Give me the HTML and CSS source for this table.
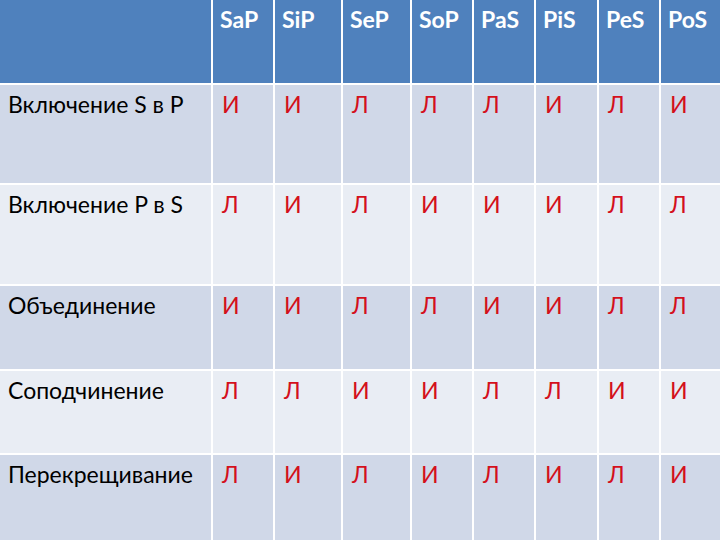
FILE: index.html
```html
<!DOCTYPE html>
<html lang="ru">
<head>
<meta charset="utf-8">
<link rel="stylesheet" href="styles.css">
</head>
<body>
<div class="table">
  <div class="cell head"></div>
  <div class="cell head">SaP</div>
  <div class="cell head">SiP</div>
  <div class="cell head">SeP</div>
  <div class="cell head">SoP</div>
  <div class="cell head">PaS</div>
  <div class="cell head">PiS</div>
  <div class="cell head">PeS</div>
  <div class="cell head">PoS</div>

  <div class="cell dark label">Включение S в P</div>
  <div class="cell dark val">И</div>
  <div class="cell dark val">И</div>
  <div class="cell dark val">Л</div>
  <div class="cell dark val">Л</div>
  <div class="cell dark val">Л</div>
  <div class="cell dark val">И</div>
  <div class="cell dark val">Л</div>
  <div class="cell dark val">И</div>

  <div class="cell light label">Включение P в S</div>
  <div class="cell light val">Л</div>
  <div class="cell light val">И</div>
  <div class="cell light val">Л</div>
  <div class="cell light val">И</div>
  <div class="cell light val">И</div>
  <div class="cell light val">И</div>
  <div class="cell light val">Л</div>
  <div class="cell light val">Л</div>

  <div class="cell dark label">Объединение</div>
  <div class="cell dark val">И</div>
  <div class="cell dark val">И</div>
  <div class="cell dark val">Л</div>
  <div class="cell dark val">Л</div>
  <div class="cell dark val">И</div>
  <div class="cell dark val">И</div>
  <div class="cell dark val">Л</div>
  <div class="cell dark val">Л</div>

  <div class="cell light label">Соподчинение</div>
  <div class="cell light val">Л</div>
  <div class="cell light val">Л</div>
  <div class="cell light val">И</div>
  <div class="cell light val">И</div>
  <div class="cell light val">Л</div>
  <div class="cell light val">Л</div>
  <div class="cell light val">И</div>
  <div class="cell light val">И</div>

  <div class="cell dark label">Перекрещивание</div>
  <div class="cell dark val">Л</div>
  <div class="cell dark val">И</div>
  <div class="cell dark val">Л</div>
  <div class="cell dark val">И</div>
  <div class="cell dark val">Л</div>
  <div class="cell dark val">И</div>
  <div class="cell dark val">Л</div>
  <div class="cell dark val">И</div>
</div>
</body>
</html>
```
FILE: styles.css
```css
html, body {
  margin: 0;
  padding: 0;
  background: #ffffff;
  overflow: hidden;
}
body {
  width: 720px;
  height: 540px;
  font-family: Lato, "Open Sans", sans-serif;
}
.table {
  display: grid;
  grid-template-columns: 211px 60px 66px 67px 60px 60px 61px 60px 59px;
  grid-template-rows: 83px 98px 99px 83px 82px 90px;
  gap: 2px;
  background: #ffffff;
}
.cell {
  padding: 5px 8px;
  font-size: 23px;
  line-height: 28px;
  white-space: nowrap;
  color: #000000;
}
.head {
  background: #4f81bd;
  color: #ffffff;
  font-weight: 700;
  padding-left: 7px;
}
.dark {
  background: #d0d8e8;
}
.light {
  background: #e9edf4;
}
.val {
  color: #d4101c;
  padding-left: 9px;
}
```
